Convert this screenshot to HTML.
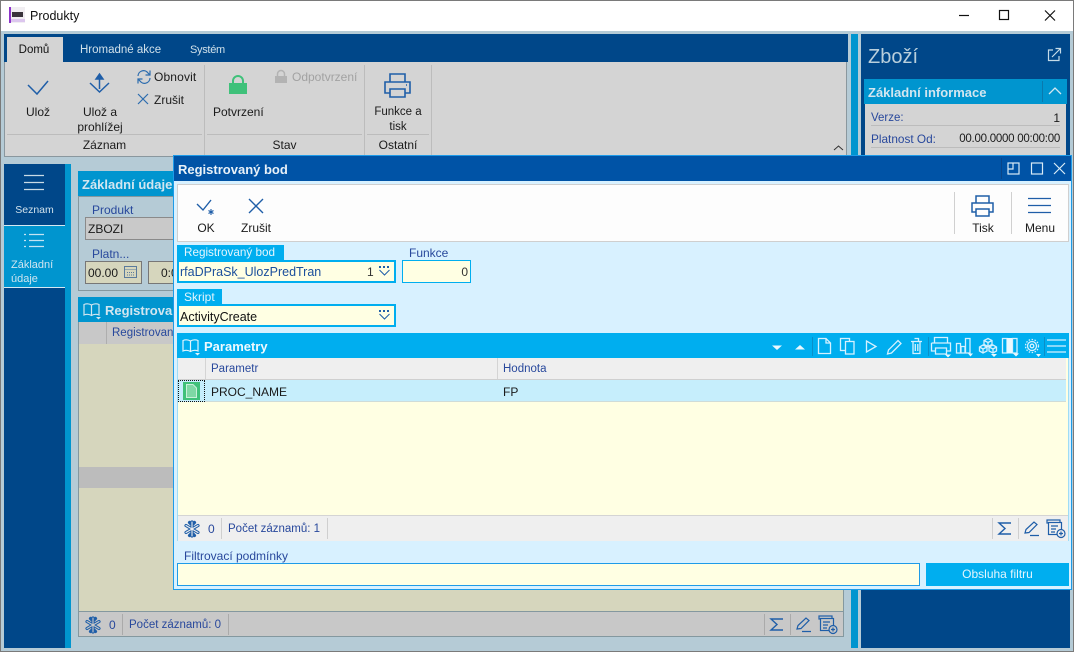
<!DOCTYPE html>
<html><head><meta charset="utf-8"><style>
html,body{margin:0;padding:0}
body{width:1074px;height:652px;position:relative;overflow:hidden;background:#b5cbd6;font-family:"Liberation Sans",sans-serif;font-size:12px;color:#1a1a1a}
.a,.t,svg{position:absolute}
.t{white-space:nowrap;line-height:16px}
.c{text-align:center}
.b{color:#28489c}
.h{font-weight:bold;font-size:13px;margin-top:1px}
.w{fill:none;stroke:#d5f1ff;stroke-width:1.300}
</style></head><body>
<!-- window -->
<div class="a" style="left:0;top:0;width:1074px;height:31px;background:#fff"></div>
<div class="a" style="left:0;top:0;width:1074px;height:1px;background:#7a7a7a"></div>
<div class="a" style="left:0;top:0;width:1px;height:652px;background:#7a7a7a"></div>
<div class="a" style="right:0;top:0;width:1px;height:652px;background:#7a7a7a"></div>
<div class="a" style="left:0;top:651px;width:1074px;height:1px;background:#7a7a7a"></div>
<svg style="left:9px;top:7px" width="17" height="17"><rect width="16" height="16" fill="#f1eef2"/><rect width="2" height="16" fill="#8d36c9"/><rect x="2" y="12" width="14" height="3" fill="#dcc6ee"/><rect x="3" y="5" width="11" height="5" fill="#39333b"/></svg>
<div class="t" style="left:30px;top:8px;font-size:12.500px;color:#111">Produkty</div>
<svg style="left:950px;top:8px" width="110" height="16" fill="none" stroke="#111" stroke-width="1.200"><path d="M9 7.500H19"/><rect x="49.500" y="2.500" width="9" height="9"/><path d="M95 2.500L105 12.500M105 2.500L95 12.500"/></svg>

<!-- ribbon -->
<div class="a" style="left:4px;top:34px;width:844px;height:28px;background:#004789"></div>
<div class="a" style="left:4px;top:62px;width:843px;height:95px;background:#d4d4d4;border:solid #8a979e;border-width:0 1px 1px 1px;box-sizing:border-box"></div>
<div class="a" style="left:7px;top:37px;width:56px;height:25px;background:#d4d4d4"></div>
<div class="t c" style="left:6px;top:42px;width:56px;font-size:11.500px;color:#111">Domů</div>
<div class="t" style="left:80px;top:42px;font-size:11.500px;color:#cfe0ea">Hromadné akce</div>
<div class="t" style="left:190px;top:42px;font-size:11px;letter-spacing:-.3px;color:#cfe0ea">Systém</div>
<svg style="left:24px;top:74px" width="30" height="24"><path d="M4 11L13 20L24 7" stroke="#1f5ea8" stroke-width="1.500" fill="none"/></svg>
<svg style="left:86px;top:70px" width="30" height="28" fill="none" stroke="#1f5ea8" stroke-width="1.500"><path d="M4 13L13.500 22L23 13"/><path d="M13.500 19V6"/><path d="M10 9L13.500 4L17 9Z" fill="#1f5ea8"/></svg>
<svg style="left:136px;top:69px" width="16" height="16" fill="none" stroke="#2c6cae" stroke-width="1.200"><path d="M2 7A5.500 5.500 0 0 1 12 4L14 6M14 1.500V6H9.500M14 9A5.500 5.500 0 0 1 4 12L2 10M2 14.500V10H6.500"/></svg>
<svg style="left:136px;top:92px" width="14" height="14" fill="none" stroke="#2c6cae" stroke-width="1.200"><path d="M2 2L12 12M12 2L2 12"/></svg>
<div class="t" style="left:154px;top:69px;letter-spacing:.15px">Obnovit</div>
<div class="t" style="left:154px;top:92px">Zrušit</div>
<div class="t c" style="left:12px;top:104px;width:52px">Ulož</div>
<div class="t c" style="left:70px;top:105px;width:60px;line-height:15px">Ulož a<br>prohlížej</div>
<div class="a" style="left:204px;top:65px;width:1px;height:90px;background:#bcbcbc"></div>
<div class="a" style="left:364px;top:65px;width:1px;height:90px;background:#bcbcbc"></div>
<div class="a" style="left:431px;top:65px;width:1px;height:90px;background:#bcbcbc"></div>
<div class="a" style="left:7px;top:134px;width:195px;height:1px;background:#bcbcbc"></div>
<div class="a" style="left:207px;top:134px;width:155px;height:1px;background:#bcbcbc"></div>
<div class="a" style="left:367px;top:134px;width:62px;height:1px;background:#bcbcbc"></div>
<svg style="left:228px;top:74px" width="20" height="22"><path d="M5 10V7A5 5 0 0 1 15 7V10" fill="none" stroke="#3fc17a" stroke-width="2"/><rect x="1" y="9" width="18" height="11" fill="#3fc17a"/></svg>
<svg style="left:274px;top:69px" width="14" height="15"><path d="M3.500 7V5A3.500 3.500 0 0 1 10.500 5V7" fill="none" stroke="#b3b3b3" stroke-width="1.500"/><rect x="1" y="7" width="12" height="7" fill="#b3b3b3"/></svg>
<div class="t" style="left:292px;top:69px;color:#a2a2a2">Odpotvrzení</div>
<div class="t" style="left:213px;top:104px">Potvrzení</div>
<svg style="left:383px;top:72px" width="30" height="27" fill="none" stroke="#1f5ea8" stroke-width="1.600"><path d="M7 10V2H22V10"/><path d="M7 21H2V10H27V21H22"/><path d="M7 17H22V25H7Z"/><path d="M23 13h1"/></svg>
<div class="t c" style="left:367px;top:105px;width:62px;line-height:15px;font-size:11.500px">Funkce a<br>tisk</div>
<div class="t c" style="left:7px;top:137px;width:195px">Záznam</div>
<div class="t c" style="left:207px;top:137px;width:155px">Stav</div>
<div class="t c" style="left:367px;top:137px;width:62px">Ostatní</div>
<svg style="left:832px;top:143px" width="14" height="10" fill="none" stroke="#333"><path d="M2 7L6.500 3L11 7"/></svg>

<!-- right panel -->
<div class="a" style="left:851px;top:34px;width:7px;height:614px;background:#0095cf"></div>
<div class="a" style="left:861px;top:34px;width:209px;height:614px;background:#004789"></div>
<div class="t" style="left:868px;top:45px;font-size:20px;line-height:24px;color:#b9cfdc">Zboží</div>
<svg style="left:1047px;top:47px" width="15" height="15" fill="none" stroke="#c5dbe8" stroke-width="1.200"><path d="M6 3H1.500V13.500H12V9"/><path d="M5 10L13 2M8.500 1.500H13.500V6.500"/></svg>
<div class="a" style="left:864px;top:79px;width:203px;height:25px;background:#0095cf"></div>
<div class="t h" style="left:868px;top:84px;color:#d2e6f0">Základní informace</div>
<div class="a" style="left:1042px;top:81px;width:1px;height:21px;background:#0a79ad"></div>
<svg style="left:1047px;top:85px" width="16" height="12" fill="none" stroke="#d2e6f0" stroke-width="1.300"><path d="M2 9L8 3L14 9"/></svg>
<div class="a" style="left:865px;top:104px;width:201px;height:52px;background:#d4d4d4"></div>
<div class="t b" style="left:871px;top:110px;font-size:11.500px">Verze:</div>
<div class="t" style="left:1040px;top:110px;width:20px;text-align:right">1</div>
<div class="a" style="left:871px;top:125px;width:189px;height:1px;background:#bcbcbc"></div>
<div class="t b" style="left:871px;top:131px;font-size:11.800px">Platnost Od:</div>
<div class="t" style="left:940px;top:131px;width:120px;text-align:right;font-size:11.500px;letter-spacing:-.25px">00.00.0000 00:00:00</div>
<div class="a" style="left:871px;top:147px;width:189px;height:1px;background:#bcbcbc"></div>

<!-- left nav -->
<div class="a" style="left:4px;top:164px;width:61px;height:484px;background:#004789"></div>
<div class="a" style="left:65px;top:164px;width:6px;height:484px;background:#0095cf"></div>
<div class="a" style="left:4px;top:226px;width:61px;height:61px;background:#0095cf"></div>
<div class="a" style="left:4px;top:225px;width:61px;height:1px;background:#d5e8f2"></div>
<div class="a" style="left:4px;top:287px;width:61px;height:1px;background:#d5e8f2"></div>
<svg style="left:24px;top:174px" width="21" height="18" stroke="#c9dbe6" stroke-width="1.200"><path d="M0 1.500H20M0 8.500H20M0 15.500H20"/></svg>
<div class="t c" style="left:4px;top:202px;width:61px;font-size:10.500px;color:#d2e2ec">Seznam</div>
<svg style="left:24px;top:233px" width="21" height="16" stroke="#c5e4f2" stroke-width="1.200"><path d="M0 1.500H2M5 1.500H20M0 7.500H2M5 7.500H20M0 13.500H2M5 13.500H20"/></svg>
<div class="t" style="left:11px;top:258px;font-size:11px;line-height:14px;color:#cfe5f0">Základní<br>údaje</div>

<!-- main form -->
<div class="a" style="left:78px;top:171px;width:766px;height:25px;background:#0095cf"></div>
<div class="t h" style="left:82px;top:176px;color:#d2e6f0">Základní údaje</div>
<div class="a" style="left:78px;top:196px;width:100px;height:95px;border:1px solid #84989f;box-sizing:border-box"></div>
<div class="t b" style="left:92px;top:202px">Produkt</div>
<div class="a" style="left:85px;top:217px;width:92px;height:23px;background:#c9c9c9;border:1px solid #8a8a8a;box-sizing:border-box"></div>
<div class="t" style="left:88px;top:221px">ZBOZI</div>
<div class="t b" style="left:92px;top:246px">Platn...</div>
<div class="a" style="left:85px;top:261px;width:57px;height:23px;background:#d6d6bd;border:1px solid #777;box-sizing:border-box"></div>
<div class="t" style="left:88px;top:265px">00.00</div>
<svg style="left:124px;top:265px" width="13" height="14" fill="none" stroke="#5a7a9c"><rect x=".5" y="1.500" width="12" height="11"/><path d="M.5 4.500H12.500M3 7.500H10M3 10H10" stroke-dasharray="1 1"/></svg>
<div class="a" style="left:148px;top:261px;width:30px;height:23px;background:#d6d6bd;border:1px solid #777;box-sizing:border-box"></div>
<div class="t" style="left:161px;top:265px">0:0</div>

<div class="a" style="left:78px;top:297px;width:766px;height:340px;border:1px solid #84989f;box-sizing:border-box;background:#d6d6bd"></div>
<div class="a" style="left:78px;top:297px;width:766px;height:25px;background:#0095cf"></div>
<svg style="left:83px;top:302px" width="19" height="18" fill="none" stroke="#d2e6f0" stroke-width="1.200"><path d="M8.500 3C6 1.500 3.500 1.500 1 2.500V13C3.500 12 6 12 8.500 13.500C11 12 13.500 12 16 13V2.500C13.500 1.500 11 1.500 8.500 3V13.500"/><path d="M13 15H18L15.500 17.500Z" fill="#d2e6f0" stroke="none"/></svg>
<div class="t h" style="left:105px;top:302px;color:#d2e6f0">Registrovan</div>
<div class="a" style="left:79px;top:322px;width:100px;height:22px;background:#c8c8c8"></div>
<div class="a" style="left:106px;top:322px;width:1px;height:22px;background:#aeaeae"></div>
<div class="t b" style="left:112px;top:325px;font-size:11.500px">Registrovan</div>
<div class="a" style="left:79px;top:467px;width:100px;height:21px;background:#bcbcbc"></div>
<div class="a" style="left:79px;top:611px;width:764px;height:25px;background:#c8c8c8;border-top:1px solid #84989f;box-sizing:border-box"></div>
<svg style="left:84px;top:616px" width="18" height="18" fill="none" stroke-linecap="round"><g stroke="#1f5ea8" stroke-width="3.200"><path d="M9 2V16M3 5.500L15 12.500M15 5.500L3 12.500M6.500 2.500L9 5L11.500 2.500M6.500 15.500L9 13L11.500 15.500"/></g><g stroke="#c8c8c8" stroke-width="1.100"><path d="M9 2V16M3 5.500L15 12.500M15 5.500L3 12.500"/></g></svg>
<div class="t" style="left:109px;top:617px;color:#28489c">0</div>
<div class="a" style="left:122px;top:614px;width:1px;height:21px;background:#aaa"></div>
<div class="t b" style="left:129px;top:617px;font-size:11.500px">Počet záznamů: 0</div>
<div class="a" style="left:228px;top:614px;width:1px;height:21px;background:#aaa"></div>
<div class="a" style="left:764px;top:614px;width:1px;height:21px;background:#aaa"></div>
<div class="a" style="left:790px;top:614px;width:1px;height:21px;background:#aaa"></div>
<svg style="left:769px;top:617px" width="16" height="15" fill="none" stroke="#1f5ea8" stroke-width="1.400"><path d="M14 2H2L8 7.500L2 13H14"/></svg>
<svg style="left:795px;top:616px" width="17" height="17" fill="none" stroke="#1f5ea8" stroke-width="1.200"><path d="M2 13L3 9.500L11 2L14 4.500L6 12.500ZM7 15.500H16"/></svg>
<svg style="left:818px;top:615px" width="20" height="20" fill="none" stroke="#1f5ea8" stroke-width="1.200"><rect x="1" y="1" width="13" height="3"/><rect x="2.500" y="3.500" width="13" height="12" fill="#c8c8c8"/><path d="M5 7H12M5 10H10M5 13H9"/><circle cx="15" cy="14.500" r="4" fill="#c8c8c8"/><path d="M13 14.500H17M15 12.500V16.500"/></svg>

<!-- dialog -->
<div class="a" style="left:173px;top:155px;width:899px;height:435px;background:#d8f1ff;border:1px solid #1e9be8;box-sizing:border-box"></div>
<div class="a" style="left:174px;top:156px;width:897px;height:25px;background:#0053a6"></div>
<div class="t h" style="left:178px;top:161px;color:#e8f1f8">Registrovaný bod</div>
<div class="a" style="left:1001px;top:158px;width:1px;height:21px;background:#0a4588"></div>
<svg style="left:1006px;top:161px" width="62" height="15" fill="none" stroke="#d8ebf6" stroke-width="1.200"><rect x="2" y="2" width="11" height="11"/><path d="M7 2V8H2"/><rect x="25.500" y="2" width="11" height="11"/><path d="M48 2L59 13M59 2L48 13"/></svg>
<div class="a" style="left:177px;top:184px;width:892px;height:58px;background:#fdfdfd;border:1px solid #cfcfcf;box-sizing:border-box"></div>
<svg style="left:195px;top:197px" width="24" height="20" fill="none" stroke="#1f5ea8" stroke-width="1.400"><path d="M2 7L8 13L16 3"/><path d="M16 12V18M13.500 13.500L18.500 16.500M18.500 13.500L13.500 16.500" stroke-width="1.100"/></svg>
<svg style="left:247px;top:197px" width="18" height="18" fill="none" stroke="#1f5ea8" stroke-width="1.400"><path d="M2 2L16 16M16 2L2 16"/></svg>
<div class="t c" style="left:186px;top:220px;width:40px">OK</div>
<div class="t c" style="left:236px;top:220px;width:40px">Zrušit</div>
<div class="a" style="left:954px;top:192px;width:1px;height:42px;background:#d0d0d0"></div>
<div class="a" style="left:1011px;top:192px;width:1px;height:42px;background:#d0d0d0"></div>
<svg style="left:970px;top:194px" width="25" height="24" fill="none" stroke="#1f5ea8" stroke-width="1.500"><path d="M6 9V2H19V9"/><path d="M6 18H2V9H23V18H19"/><path d="M6 15H19V22H6Z"/></svg>
<div class="t c" style="left:963px;top:220px;width:40px">Tisk</div>
<svg style="left:1028px;top:197px" width="24" height="18" stroke="#1f5ea8" stroke-width="1.300"><path d="M0 1.500H23M0 8.500H23M0 15.500H23"/></svg>
<div class="t c" style="left:1020px;top:220px;width:40px">Menu</div>

<div class="a" style="left:177px;top:245px;width:107px;height:15px;background:#00aeef"></div>
<div class="t" style="left:184px;top:245px;font-size:11.700px;color:#e3f5fd">Registrovaný bod</div>
<div class="a" style="left:177px;top:260px;width:219px;height:23px;background:#ffffe3;border:2px solid #00aeef;box-sizing:border-box"></div>
<div class="t" style="left:180px;top:264px;font-size:12.500px;color:#1b4f9c">rfaDPraSk_UlozPredTran</div>
<div class="t" style="left:367px;top:264px;color:#333">1</div>
<svg style="left:378px;top:266px" width="14" height="11" fill="none" stroke="#1f5ea8"><path d="M1 1H3M5 1H7M9 1H11" stroke-width="2"/><path d="M1.500 4L6.500 9L11.500 4"/></svg>
<div class="t b" style="left:409px;top:245px">Funkce</div>
<div class="a" style="left:402px;top:260px;width:69px;height:23px;background:#ffffe3;border:1px solid #00aeef;box-sizing:border-box"></div>
<div class="t" style="left:440px;top:264px;width:28px;text-align:right;color:#333">0</div>
<div class="a" style="left:177px;top:289px;width:45px;height:15px;background:#00aeef"></div>
<div class="t" style="left:184px;top:289px;color:#e3f5fd">Skript</div>
<div class="a" style="left:177px;top:304px;width:219px;height:23px;background:#ffffe3;border:2px solid #00aeef;box-sizing:border-box"></div>
<div class="t" style="left:180px;top:309px;font-size:12.500px;color:#111">ActivityCreate</div>
<svg style="left:378px;top:310px" width="14" height="11" fill="none" stroke="#1f5ea8"><path d="M1 1H3M5 1H7M9 1H11" stroke-width="2"/><path d="M1.500 4L6.500 9L11.500 4"/></svg>

<!-- grid -->
<div class="a" style="left:177px;top:333px;width:892px;height:208px;background:#ffffe3;border:1px solid #9fdcf5;box-sizing:border-box"></div>
<div class="a" style="left:177px;top:333px;width:892px;height:25px;background:#00aeef"></div>
<svg style="left:182px;top:338px" width="19" height="18" fill="none" stroke="#e3f5fd" stroke-width="1.200"><path d="M8.500 3C6 1.500 3.500 1.500 1 2.500V13C3.500 12 6 12 8.500 13.500C11 12 13.500 12 16 13V2.500C13.500 1.500 11 1.500 8.500 3V13.500"/><path d="M13 15H18L15.500 17.500Z" fill="#e3f5fd" stroke="none"/></svg>
<div class="t h" style="left:204px;top:338px;color:#eef9fe">Parametry</div>
<svg style="left:760px;top:333px" width="309" height="25">
<g fill="#eaf8fe"><path d="M12 12.500H22L17 17Z"/><path d="M35 16.500H45L40 12Z"/></g>
<g stroke="#0a8fc9"><path d="M52.500 4V23M168.500 4V23M284.500 4V23"/></g>
<g class="w">
<path d="M58.500 5.500H66L70.500 10V20.500H58.500ZM66 5.500V10H70.500"/>
<rect x="80.500" y="5.500" width="9" height="12"/><rect x="85.500" y="8.500" width="8.500" height="12.500" fill="#00aeef"/>
<path d="M106.500 8V19L116 13.500Z"/>
<path d="M127.500 21L128.500 17L138 7.500L141 10.500L131.500 20Z"/>
<path d="M151 8.500H162M153 8.500V20.500H160V8.500M154.500 5.500H158.500V8.500M155.300 11V18M157.800 11V18"/>
<path d="M174.500 10V4.500H187.500V10M171.500 10H190.500V18H186M175.500 18H171.500V10M175.500 15H186.500V21H175.500Z"/>
<path d="M196.500 10.500H200.500V20H196.500ZM201 13.500H205V20H201ZM205.500 5.500H210V20H205.500Z"/>
<path d="M228 5.500L232 7.500V11.500L228 13.500L224 11.500V7.500ZM224 7.500L228 9.500L232 7.500M228 9.500V13.500"/>
<path d="M223 12L227 14V18L223 20L219.500 18V14ZM219.500 14L223 16L227 14M223 16V20"/>
<path d="M233 12L236.500 14V18L233 20L229 18V14ZM229 14L233 16L236.500 14M233 16V20"/>
<path d="M242.500 5.500H247V20H242.500ZM252.500 5.500H257V20H252.500Z"/>
<circle cx="272" cy="13" r="4.500"/><circle cx="272" cy="13" r="1.800"/><circle cx="272" cy="13" r="6.500" stroke-dasharray="1.500 1.500"/>
<path d="M287 7H306M287 13H306M287 19H306"/>
</g>
<rect x="247" y="5" width="5" height="15.500" fill="#eaf8fe"/>
<g fill="#eaf8fe"><path d="M185 21.500H191L188 24.500Z"/><path d="M208 20.500H213L210.500 23.500Z"/><path d="M231 21H237L234 24Z"/><path d="M253 20.500H259L256 23.500Z"/><path d="M276 21H281L278.500 24Z"/></g>
</svg>
<div class="a" style="left:178px;top:358px;width:888px;height:22px;background:#efefef;border-bottom:1px solid #cfcfcf;box-sizing:border-box"></div>
<div class="a" style="left:205px;top:358px;width:1px;height:21px;background:#d4d4d4"></div>
<div class="a" style="left:497px;top:358px;width:1px;height:21px;background:#d4d4d4"></div>
<div class="t b" style="left:211px;top:361px;font-size:11.500px">Parametr</div>
<div class="t b" style="left:503px;top:361px;font-size:11.500px">Hodnota</div>
<div class="a" style="left:178px;top:380px;width:888px;height:22px;background:#c6eefc;border-bottom:1px solid #cfdcd8;box-sizing:border-box"></div>
<div class="a" style="left:178px;top:380px;width:27px;height:22px;background:#c6eefc;border:1px dotted #111;box-sizing:border-box"></div>
<div class="a" style="left:183px;top:382px;width:17px;height:18px;background:#3fc17a"></div>
<svg style="left:186px;top:384px" width="11" height="14"><path d="M.5.500H7L10.500 4V13.500H.5Z" fill="#7fd8a5" stroke="#c9f1da"/></svg>
<div class="t" style="left:211px;top:384px">PROC_NAME</div>
<div class="t" style="left:503px;top:384px">FP</div>
<div class="a" style="left:178px;top:515px;width:890px;height:26px;background:#efefef;border-top:1px solid #d4d4d4;box-sizing:border-box"></div>
<svg style="left:183px;top:520px" width="18" height="18" fill="none" stroke-linecap="round"><g stroke="#1f5ea8" stroke-width="3.200"><path d="M9 2V16M3 5.500L15 12.500M15 5.500L3 12.500M6.500 2.500L9 5L11.500 2.500M6.500 15.500L9 13L11.500 15.500"/></g><g stroke="#efefef" stroke-width="1.100"><path d="M9 2V16M3 5.500L15 12.500M15 5.500L3 12.500"/></g></svg>
<div class="t" style="left:208px;top:521px;color:#28489c">0</div>
<div class="a" style="left:221px;top:518px;width:1px;height:21px;background:#cfcfcf"></div>
<div class="t b" style="left:228px;top:521px;font-size:11.500px">Počet záznamů: 1</div>
<div class="a" style="left:327px;top:518px;width:1px;height:21px;background:#cfcfcf"></div>
<div class="a" style="left:992px;top:518px;width:1px;height:21px;background:#cfcfcf"></div>
<div class="a" style="left:1018px;top:518px;width:1px;height:21px;background:#cfcfcf"></div>
<svg style="left:997px;top:521px" width="16" height="15" fill="none" stroke="#1f5ea8" stroke-width="1.400"><path d="M14 2H2L8 7.500L2 13H14"/></svg>
<svg style="left:1023px;top:520px" width="17" height="17" fill="none" stroke="#1f5ea8" stroke-width="1.200"><path d="M2 13L3 9.500L11 2L14 4.500L6 12.500ZM7 15.500H16"/></svg>
<svg style="left:1046px;top:519px" width="20" height="20" fill="none" stroke="#1f5ea8" stroke-width="1.200"><rect x="1" y="1" width="13" height="3"/><rect x="2.500" y="3.500" width="13" height="12" fill="#efefef"/><path d="M5 7H12M5 10H10M5 13H9"/><circle cx="15" cy="14.500" r="4" fill="#efefef"/><path d="M13 14.500H17M15 12.500V16.500"/></svg>
<div class="t b" style="left:184px;top:548px">Filtrovací podmínky</div>
<div class="a" style="left:177px;top:563px;width:743px;height:23px;background:#ffffe3;border:1px solid #1e9be8;box-sizing:border-box"></div>
<div class="a c" style="left:926px;top:563px;width:143px;height:23px;background:#00aeef;color:#e3f5fd;line-height:23px">Obsluha filtru</div>
</body></html>
